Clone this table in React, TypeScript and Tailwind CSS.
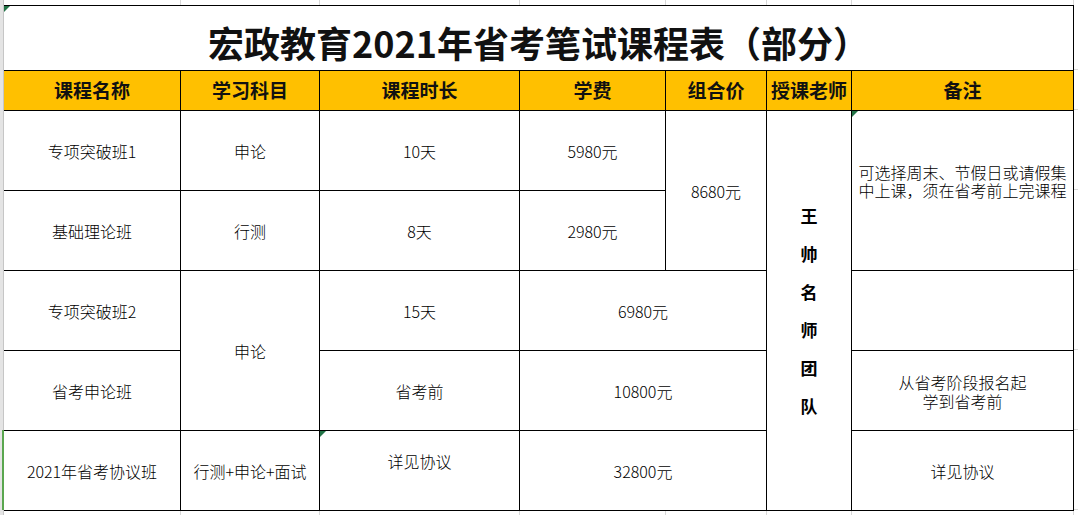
const cols = "grid-cols-[176px_138px_199px_145px_100px_84px_221px]";

function Tri() {
  return (
    <span className="absolute left-0 top-0 h-0 w-0 border-t-[6px] border-r-[6px] border-t-[#217346] border-r-transparent" />
  );
}

function Cell({
  className = "",
  children,
}: {
  className?: string;
  children?: React.ReactNode;
}) {
  return (
    <div
      className={`relative flex items-center justify-center bg-white text-center text-[16px] font-light text-black ${className}`}
    >
      {children}
    </div>
  );
}

function Head({ className = "", children }: { className?: string; children: React.ReactNode }) {
  return (
    <div
      className={`flex items-center justify-center bg-[#ffc000] text-[19px] font-bold text-[#111] ${className}`}
    >
      {children}
    </div>
  );
}

function GridStrip({ h }: { h: string }) {
  return (
    <div className={`grid ${cols} ${h} gap-px bg-[#d8d8d8] pr-px`}>
      {Array.from({ length: 7 }).map((_, i) => (
        <div key={i} className="bg-white" />
      ))}
    </div>
  );
}

export default function App() {
  const teacher = ["王", "帅", "名", "师", "团", "队"];
  return (
    <div className="flex h-[515px] w-[1078px] overflow-hidden bg-white font-['Noto_Sans_CJK_SC','Noto_Sans_CJK_JP',sans-serif]">
      {/* left gutter */}
      <div className="flex w-[4px] flex-col">
        <div className="h-[430px] border-r border-[#c6c6c6] bg-[#e4e4e4]" />
        <div className="flex h-[80px]">
          <div className="w-[2px] bg-[#e4e4e4]" />
          <div className="w-[2px] bg-[#5aa64f]" />
        </div>
        <div className="flex-1 border-r border-[#c6c6c6] bg-[#e4e4e4]" />
      </div>

      <div className="flex w-[1070px] flex-col">
        <GridStrip h="h-[5px]" />

        <div
          className={`grid ${cols} grid-rows-[64px_39px_79px_79px_79px_79px_79px] gap-px border-y border-r border-black bg-black`}
        >
          <div className="relative col-span-7 flex items-center justify-center bg-white pt-[7px] text-[36px] font-bold text-[#111]">
            <Tri />
            宏政教育2021年省考笔试课程表（部分）
          </div>

          <Head>课程名称</Head>
          <Head>学习科目</Head>
          <Head>课程时长</Head>
          <Head>学费</Head>
          <Head>组合价</Head>
          <Head>授课老师</Head>
          <Head>备注</Head>

          {/* row 1 */}
          <Cell className="col-start-1 row-start-3 pt-px">专项突破班1</Cell>
          <Cell className="col-start-2 row-start-3 pt-px">申论</Cell>
          <Cell className="col-start-3 row-start-3 pt-px">10天</Cell>
          <Cell className="col-start-4 row-start-3 pt-px">5980元</Cell>
          <Cell className="col-start-5 row-span-2 row-start-3 pt-px">8680元</Cell>
          <Cell className="col-start-6 row-span-5 row-start-3 pt-px">
            <div className="flex flex-col items-center text-[17px] font-bold leading-[38px]">
              {teacher.map((c, i) => (
                <span key={i}>{c}</span>
              ))}
            </div>
          </Cell>
          <Cell className="col-start-7 row-span-2 row-start-3 pb-[19px] leading-[18px]">
            <Tri />
            <div>
              <div>可选择周末、节假日或请假集</div>
              <div>中上课，须在省考前上完课程</div>
            </div>
          </Cell>

          {/* row 2 */}
          <Cell className="col-start-1 row-start-4 pt-px">基础理论班</Cell>
          <Cell className="col-start-2 row-start-4 pt-px">行测</Cell>
          <Cell className="col-start-3 row-start-4 pt-px">8天</Cell>
          <Cell className="col-start-4 row-start-4 pt-px">2980元</Cell>

          {/* row 3 */}
          <Cell className="col-start-1 row-start-5 pt-px">专项突破班2</Cell>
          <Cell className="col-start-2 row-span-2 row-start-5 pt-px">申论</Cell>
          <Cell className="col-start-3 row-start-5 pt-px">15天</Cell>
          <Cell className="col-span-2 col-start-4 row-start-5 pt-px">6980元</Cell>
          <Cell className="col-start-7 row-start-5" />

          {/* row 4 */}
          <Cell className="col-start-1 row-start-6 pt-px">省考申论班</Cell>
          <Cell className="col-start-3 row-start-6 pt-px">省考前</Cell>
          <Cell className="col-span-2 col-start-4 row-start-6 pt-px">10800元</Cell>
          <Cell className="col-start-7 row-start-6 pt-[2px] leading-[19px]">
            <div>
              <div>从省考阶段报名起</div>
              <div>学到省考前</div>
            </div>
          </Cell>

          {/* row 5 */}
          <Cell className="col-start-1 row-start-7 pt-px">2021年省考协议班</Cell>
          <Cell className="col-start-2 row-start-7 pt-px">行测+申论+面试</Cell>
          <Cell className="col-start-3 row-start-7 pb-[20px]">
            <Tri />
            详见协议
          </Cell>
          <Cell className="col-span-2 col-start-4 row-start-7 pt-px">32800元</Cell>
          <Cell className="col-start-7 row-start-7 pt-px">详见协议</Cell>
        </div>

        <div className="flex-1">
          <GridStrip h="h-full" />
        </div>
      </div>

      {/* right gutter */}
      <div className="flex w-[4px] flex-col gap-px bg-[#d8d8d8]">
        <div className="h-[69px] bg-white" />
        <div className="h-[39px] bg-white" />
        <div className="h-[79px] bg-white" />
        <div className="h-[79px] bg-white" />
        <div className="h-[79px] bg-white" />
        <div className="h-[79px] bg-white" />
        <div className="h-[79px] bg-white" />
        <div className="flex-1 bg-white" />
      </div>
    </div>
  );
}
